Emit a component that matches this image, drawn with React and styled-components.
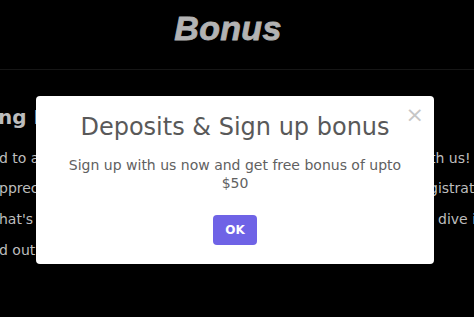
import React from "react";
import styled, { createGlobalStyle } from "styled-components";

const Global = createGlobalStyle`
  html, body {
    margin: 0;
    padding: 0;
    background: #000;
  }
  body {
    font-family: "DejaVu Sans", "Open Sans", sans-serif;
    overflow: hidden;
  }
`;

const Page = styled.div`
  width: 474px;
  height: 317px;
  background: #000;
  overflow: hidden;
`;

const Header = styled.header`
  height: 70px;
  border-bottom: 1px solid #161616;
  display: flex;
  justify-content: center;
  padding-top: 11px;
  padding-right: 18px;
  box-sizing: border-box;
`;

const Title = styled.h1`
  margin: 0;
  font-family: "Liberation Sans", Arial, sans-serif;
  font-style: italic;
  font-weight: 900;
  font-size: 34px;
  line-height: 34px;
  color: #b3b3b3;
  letter-spacing: 0.3px;
  -webkit-text-stroke: 0.8px #b3b3b3;
`;

const Content = styled.section`
  display: flex;
  flex-direction: column;
  padding-top: 34px;
  color: #bdbdbd;
`;

const Heading = styled.div`
  font-weight: bold;
  font-size: 20px;
  line-height: 26px;
  margin-left: -2px;
  white-space: nowrap;
`;

const Row = styled.div`
  display: flex;
  font-size: 14px;
  line-height: 18px;
  margin-top: ${p => p.gap}px;
  white-space: nowrap;
`;

const Left = styled.span`
  flex: 1;
  overflow: hidden;
  margin-left: -1px;
`;

const Right = styled.span`
  flex: 0 0 ${p => 474 - p.start}px;
  overflow: hidden;
`;

const Overlay = styled.div`
  position: fixed;
  inset: 0;
  padding-top: 96px;
  padding-left: 36px;
  box-sizing: border-box;
`;

const Modal = styled.div`
  position: relative;
  width: 398px;
  height: 168px;
  background: #fff;
  border-radius: 4px;
  box-sizing: border-box;
  padding: 16px 24px 0;
  display: flex;
  flex-direction: column;
  align-items: center;
  text-align: center;
`;

const Close = styled.button`
  position: absolute;
  top: 8px;
  right: 10px;
  border: 0;
  background: none;
  padding: 0;
  font-family: "DejaVu Sans", sans-serif;
  font-size: 22px;
  line-height: 22px;
  color: #c6c6c6;
  cursor: pointer;
`;

const ModalTitle = styled.h2`
  margin: 0;
  font-weight: normal;
  font-size: 24px;
  line-height: 30px;
  color: #595959;
  white-space: nowrap;
`;

const ModalText = styled.p`
  margin: 14px 0 0;
  font-size: 14px;
  line-height: 18px;
  color: #616161;
`;

const OkButton = styled.button`
  margin-top: 23px;
  width: 44px;
  height: 30px;
  border: 0;
  border-radius: 4px;
  background: #6f63e6;
  color: #fff;
  font-family: "DejaVu Sans", sans-serif;
  font-weight: bold;
  font-size: 12px;
  cursor: pointer;
`;

const lines = [
  { left: "d to an", right: "th us!", start: 430, gap: 19 },
  { left: "pprec", right: "gistration", start: 429, gap: 12 },
  { left: "hat's n", right: "dive in", start: 438, gap: 13 },
  { left: "d out", right: "", start: 474, gap: 13 },
];

const App = () => {
  return (
    <Page>
      <Global />
      <Header>
        <Title>Bonus</Title>
      </Header>
      <Content>
        <Heading>ng M</Heading>
        {lines.map((l, i) => (
          <Row key={i} gap={l.gap}>
            <Left>{l.left}</Left>
            <Right start={l.start}>{l.right}</Right>
          </Row>
        ))}
      </Content>
      <Overlay>
        <Modal>
          <Close aria-label="close">×</Close>
          <ModalTitle>Deposits &amp; Sign up bonus</ModalTitle>
          <ModalText>Sign up with us now and get free bonus of upto $50</ModalText>
          <OkButton>OK</OkButton>
        </Modal>
      </Overlay>
    </Page>
  );
};

export default App;
